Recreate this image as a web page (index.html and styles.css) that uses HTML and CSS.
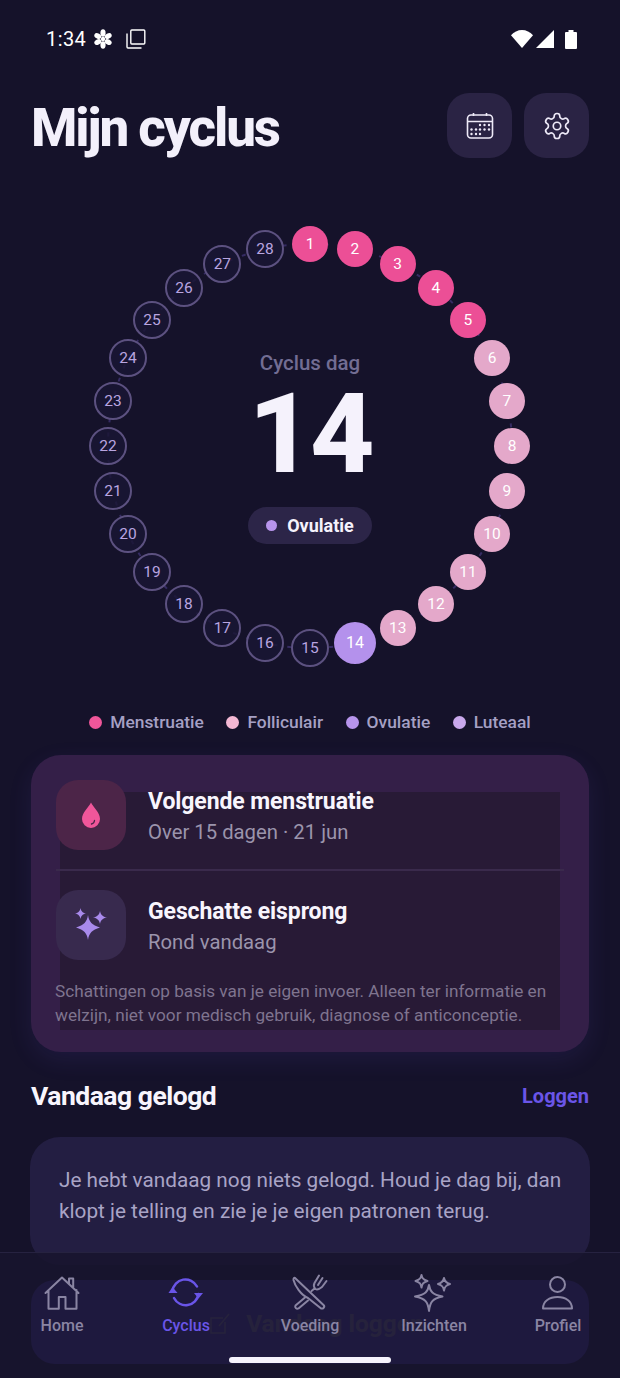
FILE: index.html
```html
<!DOCTYPE html>
<html lang="nl">

<head>
  <meta charset="UTF-8" />
  <title>Mijn cyclus</title>
  <link rel="stylesheet" href="styles.css">
</head>

<body>
  <div class="phone">

    <div class="statusbar">
      <div class="status-left">
        <span class="clock">1:34</span>
        <svg class="ic-flower" viewBox="0 0 20 20" fill="#fff">
          <ellipse cx="10" cy="4" rx="2.6" ry="3.7" />
          <ellipse cx="10" cy="4" rx="2.6" ry="3.7" transform="rotate(60 10 10)" />
          <ellipse cx="10" cy="4" rx="2.6" ry="3.7" transform="rotate(120 10 10)" />
          <ellipse cx="10" cy="4" rx="2.6" ry="3.7" transform="rotate(180 10 10)" />
          <ellipse cx="10" cy="4" rx="2.6" ry="3.7" transform="rotate(240 10 10)" />
          <ellipse cx="10" cy="4" rx="2.6" ry="3.7" transform="rotate(300 10 10)" />
          <circle cx="10" cy="10" r="2.2" />
        </svg>
        <svg class="ic-copy" viewBox="0 0 20 20" fill="none" stroke="#fff" stroke-width="1.4">
          <rect x="4.8" y="1" width="14" height="14" rx="1" />
          <path d="M1 4.5V18a1 1 0 0 0 1 1h13.5" />
        </svg>
      </div>
      <div class="status-right">
        <svg class="ic-wifi" viewBox="0 0 22 18" fill="#fff"><path d="M11 18L0 5.2C3 2 6.8 0 11 0s8 2 11 5.2z" /></svg>
        <svg class="ic-signal" viewBox="0 0 18 18" fill="#fff"><path d="M18 0v18H0z" /></svg>
        <svg class="ic-battery" viewBox="0 0 12 19" fill="#fff"><path d="M3.5 0h5v2H11a1 1 0 0 1 1 1v15a1 1 0 0 1-1 1H1a1 1 0 0 1-1-1V3a1 1 0 0 1 1-1h2.5z" /></svg>
      </div>
    </div>

    <div class="header">
      <h1>Mijn cyclus</h1>
      <div class="header-btns">
        <div class="icon-btn">
          <svg width="28" height="28" viewBox="0 0 28 28" fill="none" stroke="#eeeaf8" stroke-width="1.6">
            <rect x="1.5" y="3" width="25" height="23" rx="3.5" />
            <path d="M1.5 9.5h25M7.5 1v3M20.5 1v3" />
            <g fill="#eeeaf8" stroke="none">
              <circle cx="14" cy="13" r="1.2" /><circle cx="18.5" cy="13" r="1.2" /><circle cx="23" cy="13" r="1.2" />
              <circle cx="5.5" cy="17.5" r="1.2" /><circle cx="10" cy="17.5" r="1.2" /><circle cx="14" cy="17.5" r="1.2" /><circle cx="18.5" cy="17.5" r="1.2" /><circle cx="23" cy="17.5" r="1.2" />
              <circle cx="5.5" cy="22" r="1.2" /><circle cx="10" cy="22" r="1.2" /><circle cx="14" cy="22" r="1.2" />
            </g>
          </svg>
        </div>
        <div class="icon-btn">
          <svg width="30" height="30" viewBox="0 0 24 24" fill="none" stroke="#eeeaf8" stroke-width="1.35" stroke-linecap="round" stroke-linejoin="round">
            <path d="M12.22 2h-.44a2 2 0 0 0-2 2v.18a2 2 0 0 1-1 1.73l-.43.25a2 2 0 0 1-2 0l-.15-.08a2 2 0 0 0-2.73.73l-.22.38a2 2 0 0 0 .73 2.73l.15.1a2 2 0 0 1 1 1.72v.51a2 2 0 0 1-1 1.74l-.15.09a2 2 0 0 0-.73 2.73l.22.38a2 2 0 0 0 2.73.73l.15-.08a2 2 0 0 1 2 0l.43.25a2 2 0 0 1 1 1.73V20a2 2 0 0 0 2 2h.44a2 2 0 0 0 2-2v-.18a2 2 0 0 1 1-1.73l.43-.25a2 2 0 0 1 2 0l.15.08a2 2 0 0 0 2.73-.73l.22-.39a2 2 0 0 0-.73-2.73l-.15-.08a2 2 0 0 1-1-1.74v-.5a2 2 0 0 1 1-1.74l.15-.09a2 2 0 0 0 .73-2.73l-.22-.38a2 2 0 0 0-2.73-.73l-.15.08a2 2 0 0 1-2 0l-.43-.25a2 2 0 0 1-1-1.73V4a2 2 0 0 0-2-2z" />
            <circle cx="12" cy="12" r="3" />
          </svg>
        </div>
      </div>
    </div>

    <div class="ring" id="ring">
      <svg class="ring-ticks" viewBox="0 0 620 500">
        <circle cx="310" cy="250" r="202" fill="none" stroke="#352b62" stroke-width="2" stroke-dasharray="4 10" />
      </svg>
      <div class="ring-center">
        <div class="ring-label">Cyclus dag</div>
        <div class="ring-day">14</div>
        <div class="phase-pill"><span class="pill-dot"></span>Ovulatie</div>
      </div>
    </div>

    <div class="legend">
      <div class="legend-item"><span class="legend-dot dot-men"></span>Menstruatie</div>
      <div class="legend-item"><span class="legend-dot dot-fol"></span>Folliculair</div>
      <div class="legend-item"><span class="legend-dot dot-ovu"></span>Ovulatie</div>
      <div class="legend-item"><span class="legend-dot dot-lut"></span>Luteaal</div>
    </div>

    <div class="predict-card">
      <div class="predict-inner"></div>
      <div class="predict-row">
        <div class="predict-icon icon-pink">
          <svg width="20" height="26" viewBox="0 0 20 26">
            <path d="M10 0.5C8 5 1 10.5 1 17a9 9 0 0 0 18 0C19 10.5 12 5 10 0.5z" fill="#f0569a" />
            <path d="M13.5 18.500a4 4 0 0 1-3 3.500" fill="none" stroke="#4c2548" stroke-width="1.3" stroke-linecap="round" />
          </svg>
        </div>
        <div class="predict-text">
          <div class="predict-title">Volgende menstruatie</div>
          <div class="predict-sub">Over 15 dagen · 21 jun</div>
        </div>
      </div>
      <div class="predict-line"></div>
      <div class="predict-row">
        <div class="predict-icon icon-purple">
          <svg width="34" height="34" viewBox="0 0 34 34" fill="#a98aec">
            <path d="M14 7c1 7 4 10 12 12.5-8 2.500-11 5.500-12 12.500-1-7-4-10-12-12.500 8-2.500 11-5.500 12-12.500z" />
            <path d="M6.5 0c.5 3 1.8 4.700 5.500 5.500-3.700.8-5 2.500-5.500 5.500-.5-3-1.800-4.700-5.500-5.500 3.700-.8 5-2.500 5.500-5.500z" />
            <path d="M26 3c.7 3.500 2.500 5.800 7 6.500-4.500.7-6.300 3-7 6.500-.7-3.500-2.500-5.800-7-6.500 4.500-.7 6.300-3 7-6.500z" />
          </svg>
        </div>
        <div class="predict-text">
          <div class="predict-title">Geschatte eisprong</div>
          <div class="predict-sub">Rond vandaag</div>
        </div>
      </div>
      <p class="predict-note">Schattingen op basis van je eigen invoer. Alleen ter informatie en welzijn, niet voor medisch gebruik, diagnose of anticonceptie.</p>
    </div>

    <div class="section-head">
      <h2>Vandaag gelogd</h2>
      <span class="section-link">Loggen</span>
    </div>

    <div class="empty-card">Je hebt vandaag nog niets gelogd. Houd je dag bij, dan klopt je telling en zie je je eigen patronen terug.</div>

    <div class="log-btn">
      <svg width="20" height="22" viewBox="0 0 20 22" fill="none" stroke="#8a87a0" stroke-width="1.5"><path d="M15 9v11H1V5h12M9 13l10-12" /></svg>
      <span>Vandaag loggen</span>
    </div>

    <nav class="navbar">
      <div class="nav-item">
        <svg class="nav-icon" viewBox="0 0 36 36" fill="none" stroke="currentColor" stroke-width="2" stroke-linejoin="round" stroke-linecap="round">
          <path d="M1.5 18L18 2.500 34.500 18M25 8.500V3.500h4.200V13M4.500 15v18.800h10.300V22h6.700v11.800h11V15" />
        </svg>
        <span>Home</span>
      </div>
      <div class="nav-item nav-active">
        <svg class="nav-icon" viewBox="0 0 36 36" fill="none" stroke="currentColor" stroke-width="2.5" stroke-linecap="round">
          <path d="M29 11.500A13 13 0 0 0 4.500 16" />
          <path d="M30.500 19A13 13 0 0 1 6 23" />
          <path d="M0.500 18L4.500 12 9.500 18z" fill="currentColor" stroke="none" />
          <path d="M26 18L30.500 23.500 35 18z" fill="currentColor" stroke="none" />
        </svg>
        <span>Cyclus</span>
      </div>
      <div class="nav-item">
        <svg class="nav-icon" viewBox="0 0 36 36" fill="none" stroke="currentColor" stroke-width="2" stroke-linejoin="round" stroke-linecap="round">
          <path d="M3 3L31.500 30a2 2 0 0 1-3 3L16 23C9 20 3 11 1.500 5 1.300 3.500 2 2.500 3 3z" />
          <path d="M13 22.500L3.500 30.500a2.200 2.200 0 0 0 3 3L16 25.500" />
          <path d="M27 0.500L22.500 8Q21 11 23 13.500T30 12L34.500 6M30.500 3L26 10M22.500 13.500L19.500 16" />
        </svg>
        <span>Voeding</span>
      </div>
      <div class="nav-item">
        <svg class="nav-icon" viewBox="0 0 36 36" fill="none" stroke="currentColor" stroke-width="2" stroke-linejoin="round">
          <path transform="translate(-2 2)" d="M15 8c1 6.500 3.500 9.500 13.500 11.500C18.500 21.500 16 25 15 34c-1-9-3.500-12.500-14-14.500C11.500 17.500 14 14.500 15 8z" />
          <path transform="translate(-2 0.5)" d="M7.500 -0.5c.6 3.200 1.600 4.800 6 6-4.400 1.200-5.400 2.800-6 6.500-.6-3.700-1.600-5.300-6-6.500 4.400-1.200 5.400-2.800 6-6z" />
          <path transform="translate(-1.500 0)" d="M29.500 3c.6 3.200 1.700 4.800 6 6-4.300 1.200-5.400 2.800-6 6.500-.6-3.700-1.700-5.300-6-6.500 4.300-1.200 5.400-2.800 6-6z" />
        </svg>
        <span>Inzichten</span>
      </div>
      <div class="nav-item">
        <svg class="nav-icon" viewBox="0 0 36 36" fill="none" stroke="currentColor" stroke-width="2" stroke-linejoin="round">
          <circle cx="17.5" cy="9.500" r="7.500" />
          <path d="M3 33.500c0-7.500 6.500-11.500 14.500-11.500s14.500 4 14.500 11.500z" />
        </svg>
        <span>Profiel</span>
      </div>
      <div class="home-pill"></div>
    </nav>

  </div>

  <script>
    const ring = document.getElementById("ring");
    for (let day = 1; day <= 28; day++) {
      const angle = (day - 1) * (Math.PI * 2 / 28);
      const dot = document.createElement("div");
      let kind = "day-luteal";
      if (day <= 5) kind = "day-men";
      else if (day <= 13) kind = "day-fol";
      else if (day === 14) kind = "day-ovu";
      dot.className = "day " + kind;
      dot.textContent = day;
      dot.style.left = (310 + 202 * Math.sin(angle)) + "px";
      dot.style.top = (250 - 202 * Math.cos(angle)) + "px";
      ring.appendChild(dot);
    }
  </script>
</body>

</html>
```

FILE: styles.css
```css
* {
  box-sizing: border-box;
}

body {
  margin: 0;
  background: #15122a;
  font-family: Roboto, "Noto Sans", sans-serif;
  color: #f3f0fb;
}

.phone {
  position: relative;
  width: 620px;
  height: 1378px;
  overflow: hidden;
  background: #15122a;
}

/* status bar */
.statusbar {
  display: flex;
  justify-content: space-between;
  align-items: center;
  height: 78px;
  padding: 0 43px 0 46px;
}

.status-left,
.status-right {
  display: flex;
  align-items: center;
}

.clock {
  font-size: 20px;
  color: #fff;
  letter-spacing: 0.4px;
}

.ic-flower {
  width: 20px;
  height: 20px;
  margin-left: 7px;
}

.ic-copy {
  width: 20px;
  height: 20px;
  margin-left: 13px;
}

.ic-wifi {
  width: 22px;
  height: 18px;
}

.ic-signal {
  width: 18px;
  height: 18px;
  margin-left: 3px;
}

.ic-battery {
  width: 12px;
  height: 19px;
  margin-left: 11px;
}

/* header */
.header {
  display: flex;
  justify-content: space-between;
  align-items: flex-start;
  margin-top: 15px;
  padding: 0 31px;
}

h1 {
  margin: 0;
  font-size: 53px;
  font-weight: 800;
  letter-spacing: -2.1px;
  line-height: 70px;
}

.header-btns {
  display: flex;
  gap: 12px;
}

.icon-btn {
  display: flex;
  align-items: center;
  justify-content: center;
  width: 65px;
  height: 65px;
  border-radius: 22px;
  background: #2a2344;
}

/* ring */
.ring {
  position: relative;
  height: 500px;
  margin-top: 33px;
}

.ring-ticks {
  position: absolute;
  top: 0;
  left: 0;
  width: 620px;
  height: 500px;
}

.ring-center {
  position: absolute;
  top: 0;
  left: 0;
  right: 0;
  bottom: 0;
  display: flex;
  flex-direction: column;
  align-items: center;
  padding-top: 155px;
}

.ring-label {
  font-size: 20.5px;
  font-weight: 500;
  color: #726d93;
  line-height: 20px;
  margin-top: 2px;
}

.ring-day {
  font-size: 112px;
  font-weight: 800;
  line-height: 84px;
  margin-top: 18.5px;
  color: #f5f2fc;
  letter-spacing: -3px;
}

.phase-pill {
  display: flex;
  align-items: center;
  gap: 10px;
  height: 37px;
  margin-top: 31.5px;
  padding: 0 18px;
  border-radius: 19px;
  background: #2c2548;
  font-size: 18px;
  font-weight: 700;
  color: #f5f2fc;
}

.pill-dot {
  width: 11px;
  height: 11px;
  border-radius: 50%;
  background: #b794ec;
}

.day {
  position: absolute;
  display: flex;
  align-items: center;
  justify-content: center;
  width: 36px;
  height: 36px;
  margin: -18px 0 0 -18px;
  border-radius: 50%;
  font-size: 15.5px;
  font-weight: 450;
  color: #fff;
}

.day-men {
  background: #ec4f96;
}

.day-fol {
  background: #e4a8ca;
}

.day-ovu {
  width: 42px;
  height: 42px;
  margin: -21px 0 0 -21px;
  background: #b491ec;
  font-size: 16px;
}

.day-luteal {
  width: 38px;
  height: 38px;
  margin: -19px 0 0 -19px;
  border: 2px solid #5c5180;
  background: rgba(26, 22, 52, 0.82);
  color: #b9a5e0;
}

/* legend */
.legend {
  display: flex;
  justify-content: center;
  gap: 22.5px;
  margin-top: 13px;
  font-size: 17.4px;
  font-weight: 500;
  line-height: 26px;
  color: #a5a0c4;
}

.legend-item {
  display: flex;
  align-items: center;
  gap: 8px;
}

.legend-dot {
  width: 13px;
  height: 13px;
  border-radius: 50%;
}

.dot-men {
  background: #f0569a;
}

.dot-fol {
  background: #f4b8d4;
}

.dot-ovu {
  background: #b794ec;
}

.dot-lut {
  background: #c9a8ec;
}

/* prediction card */
.predict-card {
  position: relative;
  margin: 20px 31px 0;
  padding: 25px;
  border-radius: 30px;
  background: #341f48;
  box-shadow: 0 8px 24px rgba(106, 85, 232, 0.1);
}

.predict-inner {
  position: absolute;
  top: 37px;
  left: 29px;
  width: 500px;
  height: 238px;
  background: #281a36;
}

.predict-row {
  position: relative;
  display: flex;
  align-items: center;
  gap: 22px;
}

.predict-icon {
  display: flex;
  align-items: center;
  justify-content: center;
  width: 70px;
  height: 70px;
  border-radius: 22px;
}

.icon-pink {
  background: #4c2548;
}

.icon-purple {
  background: #382a4e;
}

.predict-text {
  padding-top: 4px;
}

.predict-title {
  font-size: 23px;
  font-weight: 700;
  line-height: 28px;
  letter-spacing: -0.1px;
  color: #f8f5fd;
  margin-bottom: 2px;
}

.predict-sub {
  font-size: 20.3px;
  line-height: 28px;
  color: #9b94ac;
}

.predict-line {
  position: relative;
  height: 2px;
  margin: 19px 0;
  background: #3a2a4c;
}

.predict-note {
  position: relative;
  margin: 19px 0 0 -1px;
  font-size: 17.2px;
  line-height: 24px;
  color: #7f748f;
}

/* logged today */
.section-head {
  display: flex;
  justify-content: space-between;
  align-items: center;
  margin-top: 26px;
  padding: 0 31px;
  line-height: 36px;
}

h2 {
  margin: 0;
  font-size: 26.5px;
  font-weight: 700;
  letter-spacing: -0.5px;
  color: #f8f5fd;
}

.section-link {
  font-size: 20px;
  font-weight: 700;
  color: #6a55e8;
}

.empty-card {
  height: 128px;
  margin: 23px 30px 0;
  padding: 28px 18px 0 29px;
  border-radius: 30px;
  background: #231e42;
  font-size: 20.75px;
  line-height: 31px;
  color: #a9a4c6;
}

/* log button, sits under the nav */
.log-btn {
  position: absolute;
  top: 1280px;
  left: 31px;
  display: flex;
  align-items: center;
  justify-content: center;
  gap: 16px;
  width: 558px;
  height: 84px;
  padding: 3px 0 0 14px;
  border-radius: 24px;
  background: #4a3bb0;
  font-size: 24.5px;
  font-weight: 700;
  color: #8a87a0;
}

/* bottom nav */
.navbar {
  position: absolute;
  left: 0;
  right: 0;
  bottom: 0;
  display: grid;
  grid-template-columns: repeat(5, 124px);
  height: 126px;
  border-top: 1px solid #262240;
  background: rgba(24, 20, 46, 0.88);
}

.nav-item {
  display: flex;
  flex-direction: column;
  align-items: center;
  padding-top: 22px;
  font-size: 16px;
  font-weight: 500;
  color: #8a85a3;
}

.nav-icon {
  width: 36px;
  height: 36px;
  margin-bottom: 5px;
  overflow: visible;
}

.nav-active {
  color: #6a55e8;
}

.home-pill {
  position: absolute;
  left: 229px;
  bottom: 15px;
  width: 162px;
  height: 6px;
  border-radius: 3px;
  background: #f5f2fc;
}
```
